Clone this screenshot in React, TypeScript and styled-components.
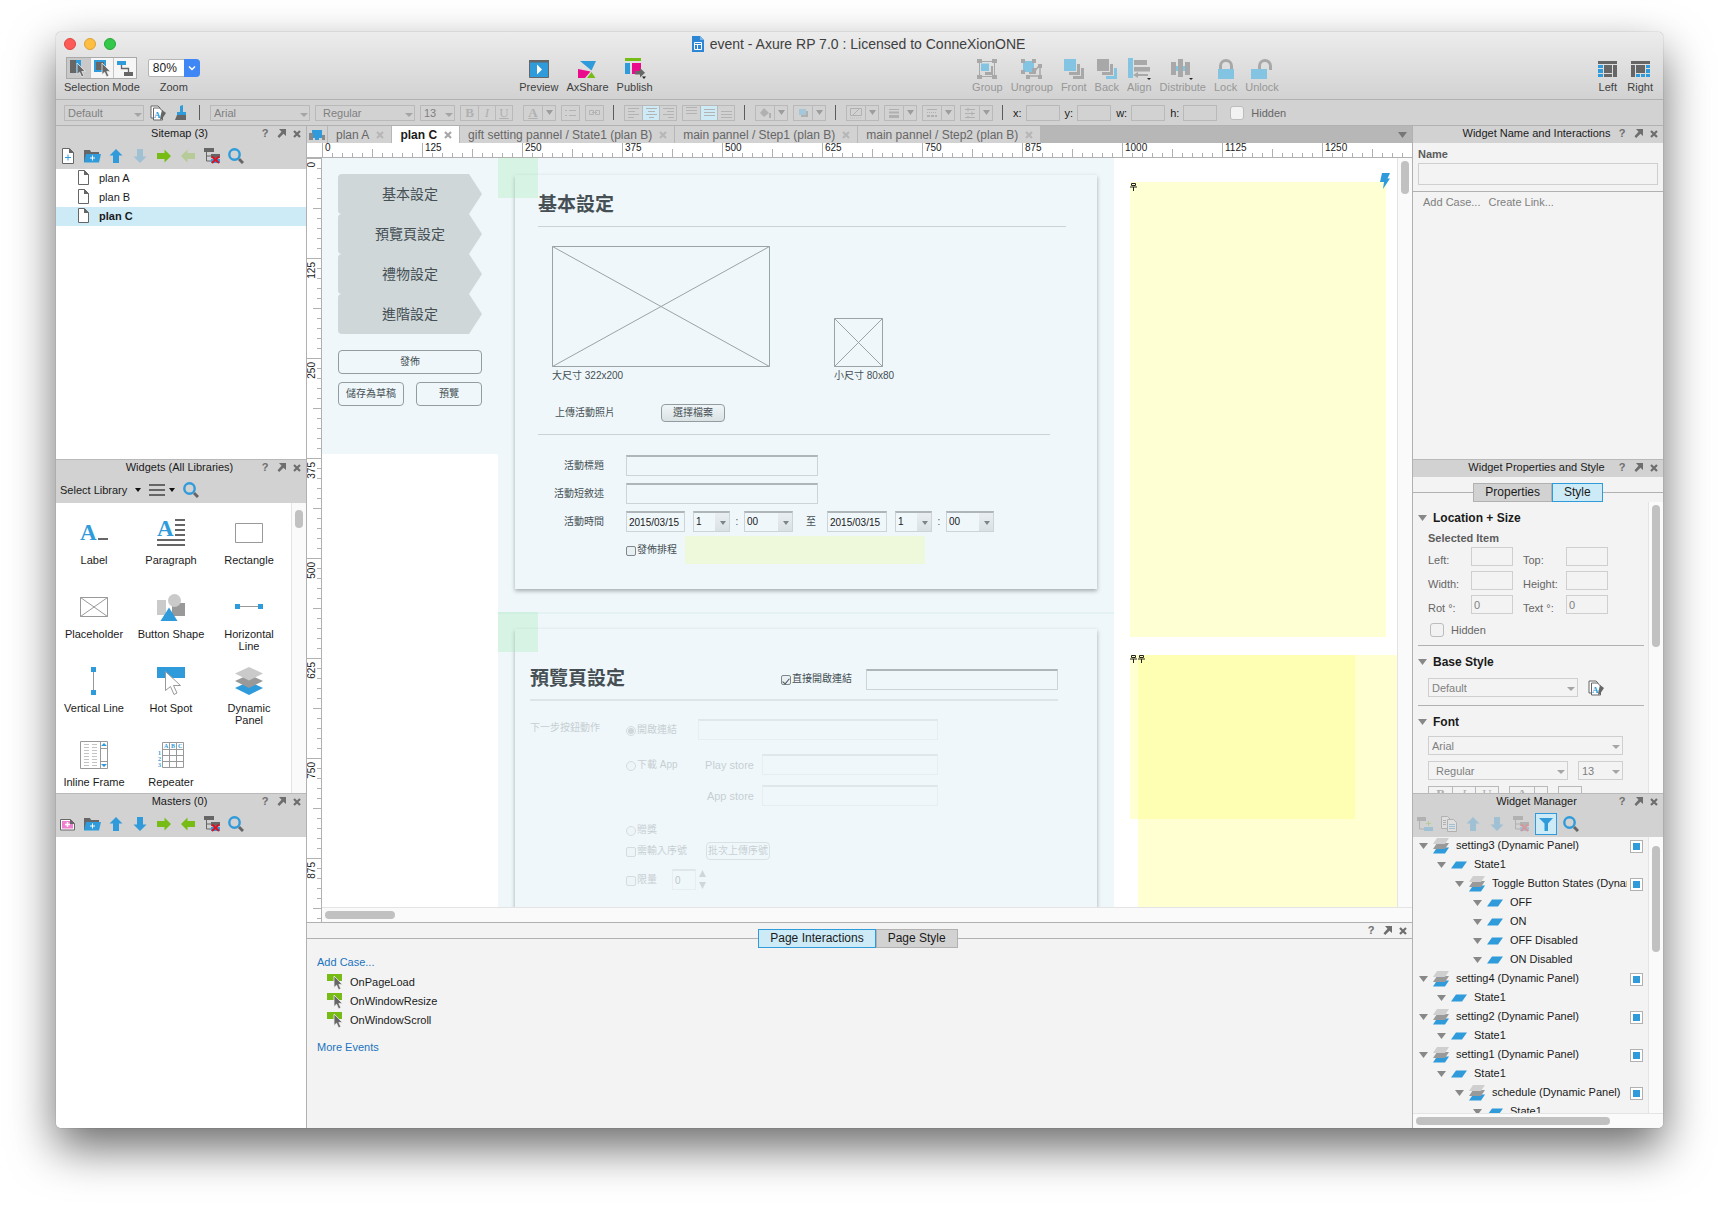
import React from 'react';
import styled, { createGlobalStyle, css } from 'styled-components';

const BLUE = '#2f9bdb';
const GREY = '#666';
const GREEN = '#76bc14';
const PINK = '#ec0a8c';
const SKY = '#82c4e2';
const DIM = '#a8a8a8';

const GlobalStyle = createGlobalStyle`
  * { box-sizing: border-box; }
  body {
    margin: 0;
    background: #fff;
    font: 11px/14px "Liberation Sans", "Noto Sans CJK TC", sans-serif;
    color: #1a1a1a;
  }
  button, input, select { font: inherit; color: inherit; margin: 0; }
  button { cursor: default; }
  svg { display: block; flex: none; }
  h1, h2, h3, p, ul, figure, fieldset { margin: 0; padding: 0; border: 0; }
  ul { list-style: none; }
`;

/* ---------- window frame ---------- */

const Desktop = styled.div`
  height: 100vh;
  min-height: 700px;
  padding: 32px 56px 80px;
  overflow: hidden;
`;

const Window = styled.div`
  display: flex;
  flex-direction: column;
  height: 100%;
  border-radius: 5px;
  overflow: hidden;
  background: #f3f3f3;
  box-shadow: 0 0 1px rgba(0, 0, 0, 0.5), 0 20px 46px rgba(0, 0, 0, 0.58);
`;

const Chrome = styled.header`
  height: 68px;
  flex: none;
  padding: 3px 10px 0 8px;
  background: linear-gradient(#ececec, #d2d2d2);
  border-bottom: 1px solid #b1b1b1;
`;

const TitleRow = styled.div`
  display: grid;
  grid-template-columns: 1fr auto 1fr;
  align-items: center;
  height: 18px;
`;

const Lights = styled.div`
  display: flex;
  gap: 8px;
`;

const Light = styled.button<{ $fill: string; $edge: string }>`
  width: 12px;
  height: 12px;
  padding: 0;
  border-radius: 50%;
  border: 1px solid ${(p) => p.$edge};
  background: ${(p) => p.$fill};
`;

const WindowTitle = styled.h1`
  display: flex;
  align-items: center;
  gap: 6px;
  font-size: 14px;
  font-weight: 400;
  line-height: 18px;
  color: #404040;
`;

const ToolRow = styled.div`
  display: flex;
  justify-content: space-between;
  padding-top: 4px;
`;

const ToolGroup = styled.div<{ $gap?: number }>`
  display: flex;
  gap: ${(p) => p.$gap ?? 8}px;
`;

const Tool = styled.button<{ $dim?: boolean }>`
  display: flex;
  flex-direction: column;
  align-items: center;
  padding: 0;
  border: 0;
  background: none;
  color: ${(p) => (p.$dim ? '#979797' : '#404040')};
  line-height: 14px;
`;

const ToolBlock = styled.div`
  display: flex;
  flex-direction: column;
  align-items: center;
  color: #404040;
`;

const ToolFace = styled.span`
  display: flex;
  align-items: center;
  justify-content: center;
  height: 23px;
`;

const Segments = styled.div`
  display: flex;
  height: 22px;
  margin-bottom: 1px;
  border: 1px solid #a9a9a9;
`;

const Segment = styled.button<{ $on?: boolean }>`
  width: 23px;
  padding: 1px 2px;
  border: 0;
  border-left: ${(p) => (p.$on ? 0 : '1px solid #c4c4c4')};
  background: ${(p) => (p.$on ? '#c9c9c9' : '#f6f6f6')};
`;

const ZoomBox = styled.span`
  position: relative;
  display: block;
  margin: 2px 0 3px;
  select {
    appearance: none;
    width: 52px;
    height: 18px;
    padding: 0 4px;
    border: 1px solid #b5b5b5;
    border-radius: 2px 4px 4px 2px;
    background: #fff;
    font-size: 12px;
    color: #1a1a1a;
  }
  svg {
    position: absolute;
    right: 0;
    top: 0;
    pointer-events: none;
  }
`;

/* ---------- format bar ---------- */

const FormatBar = styled.div`
  display: flex;
  align-items: center;
  gap: 5px;
  height: 26px;
  flex: none;
  padding: 0 8px;
  background: #d2d2d2;
  border-bottom: 1px solid #b1b1b1;
`;

const PickBox = styled.span<{ $w: number; $panel?: boolean; $inset?: boolean }>`
  position: relative;
  display: block;
  flex: none;
  width: ${(p) => p.$w}px;
  select {
    appearance: none;
    display: block;
    width: 100%;
    height: ${(p) => (p.$panel ? 19 : 16)}px;
    padding: 0 ${(p) => (p.$inset ? 7 : 3)}px;
    border: 1px solid ${(p) => (p.$panel ? '#cfcfcf' : '#b9b9b9')};
    border-radius: 0;
    background: transparent;
    color: #808080;
    line-height: 14px;
  }
  &::after {
    content: '';
    position: absolute;
    right: ${(p) => (p.$panel ? 3 : 2)}px;
    top: ${(p) => (p.$panel ? 9 : 8)}px;
    border: 4px solid transparent;
    border-top-color: #a5a5a5;
    border-bottom: 0;
    pointer-events: none;
  }
`;

const IconButton = styled.button<{ $w?: number; $dim?: boolean; $on?: boolean }>`
  display: flex;
  align-items: center;
  justify-content: center;
  width: ${(p) => p.$w ?? 20}px;
  height: ${(p) => (p.$on ? 22 : 20)}px;
  padding: 0;
  border: ${(p) => (p.$on ? `1px solid ${BLUE}` : 0)};
  background: ${(p) => (p.$on ? '#cdeaf7' : 'none')};
  opacity: ${(p) => (p.$dim ? 0.3 : 1)};
`;

const Divider = styled.span`
  width: 1px;
  height: 15px;
  margin: 0 5px 0 4px;
  background: #5c5c5c;
`;

const Cells = styled.span<{ $push?: boolean }>`
  display: flex;
  height: 16px;
  border: 1px solid #b9b9b9;
  margin-left: ${(p) => (p.$push ? 5 : 0)}px;
`;

const Cell = styled.button<{ $on?: boolean; $w?: number }>`
  display: flex;
  align-items: center;
  justify-content: center;
  width: ${(p) => p.$w ?? 17}px;
  padding: 0;
  border: 0;
  background: ${(p) => (p.$on ? '#cdeaf7' : 'transparent')};
  color: #b0b0b0;
  font-family: "Liberation Serif", serif;
  font-size: 13px;
  line-height: 14px;
  & + & { border-left: 1px solid #b9b9b9; }
`;

const Field = styled.label`
  display: flex;
  align-items: center;
  gap: 4px;
  color: #1a1a1a;
  input {
    width: 34px;
    height: 16px;
    border: 1px solid #b9b9b9;
    background: transparent;
    padding: 0 3px;
  }
`;

const TickLabel = styled.label<{ $left?: number }>`
  display: flex;
  align-items: center;
  gap: 7px;
  margin-left: ${(p) => p.$left ?? 8}px;
  color: #666;
  input {
    appearance: none;
    width: 14px;
    height: 14px;
    margin: 0;
    border: 1px solid #bcbcbc;
    border-radius: 3px;
    background: #f2f2f2;
  }
`;

/* ---------- three columns ---------- */

const Body = styled.div`
  display: grid;
  grid-template-columns: 251px minmax(0, 1fr) 251px;
  flex: 1;
  min-height: 0;
`;

const SideColumn = styled.aside<{ $right?: boolean }>`
  display: grid;
  grid-template-rows: 333px 334px minmax(0, 1fr);
  min-height: 0;
  border-${(p) => (p.$right ? 'left' : 'right')}: 1px solid #b1b1b1;
`;

const Panel = styled.section<{ $white?: boolean }>`
  display: flex;
  flex-direction: column;
  min-height: 0;
  overflow: hidden;
  background: ${(p) => (p.$white ? '#fff' : '#f3f3f3')};
  & + & { border-top: 1px solid #b9b9b9; }
`;

const PanelBar = styled.div`
  display: grid;
  grid-template-columns: 38px minmax(0, 1fr) 44px;
  flex: none;
  height: 17px;
  padding: 0 3px 0 6px;
  background: #d2d2d2;
  h2 {
    grid-column: 2;
    font-size: 11px;
    font-weight: 400;
    line-height: 15px;
    text-align: center;
    white-space: nowrap;
  }
`;

const BarActions = styled.span`
  display: flex;
  gap: 4px;
`;

const BarAction = styled.button`
  display: flex;
  align-items: center;
  justify-content: center;
  width: 12px;
  height: 15px;
  padding: 0;
  border: 0;
  background: none;
  color: #6e6e6e;
  font-size: 11px;
  font-weight: 700;
  line-height: 15px;
`;

const PanelTools = styled.div`
  display: flex;
  align-items: center;
  gap: 4px;
  flex: none;
  height: 26px;
  padding: 0 2px;
  background: #d2d2d2;
`;

const PageRow = styled.li<{ $on?: boolean }>`
  display: flex;
  align-items: center;
  gap: 10px;
  height: 19px;
  padding: 0 0 2px 22px;
  background: ${(p) => (p.$on ? '#cdeaf7' : 'transparent')};
  font-weight: ${(p) => (p.$on ? 700 : 400)};
`;

const LibraryButton = styled.button<{ $gap: number }>`
  display: flex;
  align-items: center;
  gap: ${(p) => p.$gap}px;
  height: 20px;
  padding: 0 2px;
  border: 0;
  background: none;
`;

const ScrollArea = styled.div`
  display: flex;
  flex: 1;
  min-height: 0;
  overflow: hidden;
`;

const Track = styled.div<{ $h?: boolean }>`
  flex: none;
  padding: 3px;
  background: #fafafa;
  ${(p) =>
    p.$h
      ? css`height: 15px; border-top: 1px solid #e4e4e4;`
      : css`width: 15px; border-left: 1px solid #e4e4e4;`}
`;

const Thumb = styled.div<{ $len: number; $from?: number; $h?: boolean }>`
  border-radius: 4px;
  background: #c1c1c1;
  ${(p) =>
    p.$h
      ? css`height: 8px; width: ${p.$len}px; margin-left: ${p.$from ?? 0}px;`
      : css`width: 8px; height: ${p.$len}px; margin-top: ${p.$from ?? 0}px;`}
`;

const WidgetGrid = styled.div`
  flex: 1;
  display: grid;
  grid-template-columns: 76px 78px 78px;
  grid-auto-rows: 74px;
  padding-top: 16px;
  overflow: hidden;
`;

const WidgetItem = styled.button`
  display: flex;
  flex-direction: column;
  align-items: center;
  gap: 7px;
  padding: 0;
  border: 0;
  background: none;
  line-height: 12px;
`;

const WidgetName = styled.span`
  max-width: 72px;
`;

/* ---------- centre ---------- */

const Center = styled.main`
  display: flex;
  flex-direction: column;
  min-height: 0;
  background: #fff;
`;

const TabStrip = styled.div`
  display: flex;
  align-items: stretch;
  flex: none;
  height: 17px;
  background: #b7b7b7;
`;

const DocTab = styled.button<{ $on?: boolean }>`
  display: flex;
  align-items: center;
  gap: 7px;
  padding: 0 7px 0 8px;
  border: 0;
  border-right: 1px solid #b7b7b7;
  background: ${(p) => (p.$on ? '#fff' : '#d2d2d2')};
  color: ${(p) => (p.$on ? '#1a1a1a' : '#666')};
  font-size: 12px;
  font-weight: ${(p) => (p.$on ? 700 : 400)};
  line-height: 16px;
  white-space: nowrap;
`;

const TabIcon = styled.span`
  display: flex;
  align-items: center;
  width: 21px;
  padding-left: 2px;
  background: #d2d2d2;
  border-right: 1px solid #b7b7b7;
`;

const TabMenu = styled.button`
  margin-left: auto;
  padding: 0 5px;
  border: 0;
  background: none;
`;

const RulerTop = styled.div`
  display: flex;
  flex: none;
  height: 15px;
  padding-left: 15px;
  overflow: hidden;
  border-bottom: 1px solid #b1b1b1;
  font-size: 10px;
  line-height: 10px;
`;

const MarkTop = styled.span`
  flex: none;
  width: 100px;
  padding-left: 2px;
  border-left: 1px solid #b1b1b1;
  background:
    linear-gradient(#b1b1b1, #b1b1b1) 49px bottom / 1px 8px no-repeat,
    repeating-linear-gradient(90deg, transparent 0 9px, #b1b1b1 9px 10px) 0 bottom / 100% 4px no-repeat;
`;

const Work = styled.div`
  display: flex;
  flex: 1;
  min-height: 0;
`;

const RulerSide = styled.div`
  display: flex;
  flex-direction: column;
  flex: none;
  width: 15px;
  overflow: hidden;
  border-right: 1px solid #b1b1b1;
  font-size: 10px;
  line-height: 10px;
`;

const MarkSide = styled.span`
  flex: none;
  height: 100px;
  border-top: 1px solid #b1b1b1;
  background:
    linear-gradient(#b1b1b1, #b1b1b1) right 49px / 8px 1px no-repeat,
    repeating-linear-gradient(180deg, transparent 0 9px, #b1b1b1 9px 10px) right 0 / 4px 100% no-repeat;
  span {
    display: block;
    padding-bottom: 3px;
    writing-mode: vertical-rl;
    transform: rotate(180deg);
    width: 10px;
  }
`;

const CanvasArea = styled.div`
  display: flex;
  flex-direction: column;
  flex: 1;
  min-width: 0;
`;

const CanvasView = styled.div`
  position: relative;
  flex: 1;
  min-width: 0;
  min-height: 0;
  overflow: hidden;
  color: #454f54;
  font-size: 10px;
`;

/* Shapes dropped on the free canvas of the document. */
const Region = styled.div<{ $x: number; $y: number; $w: number; $h: number; $fill: string; $edge?: boolean }>`
  position: absolute;
  left: ${(p) => p.$x}px;
  top: ${(p) => p.$y}px;
  width: ${(p) => p.$w}px;
  height: ${(p) => p.$h}px;
  background: ${(p) => p.$fill};
  ${(p) => p.$edge && css`border-top: 2px solid #e4f2f6;`}
`;

const SideMenu = styled(Region)`
  padding: 16px;
`;

const Step = styled.button`
  display: block;
  width: 144px;
  height: 40px;
  padding: 0 12px;
  border: 0;
  border-radius: 4px 0 0 4px;
  background: #cfd7d9;
  clip-path: polygon(0 0, 91% 0, 100% 50%, 91% 100%, 0 100%);
  font-size: 14px;
  line-height: 38px;
`;

const Actions = styled.div`
  display: grid;
  grid-template-columns: 66px 66px;
  justify-content: space-between;
  gap: 8px 0;
  margin-top: 16px;
  & > :first-child { grid-column: 1 / -1; }
`;

const WireButton = styled.button`
  height: 24px;
  padding: 0;
  border: 1px solid #939da0;
  border-radius: 4px;
  background: transparent;
  line-height: 22px;
  white-space: nowrap;
`;

const Card = styled.section<{ $y: number; $h: number }>`
  position: absolute;
  left: 193px;
  top: ${(p) => p.$y}px;
  width: 582px;
  height: ${(p) => p.$h}px;
  background: #eff7fa;
  box-shadow: 0 2px 4px rgba(70, 80, 85, 0.45);
`;

const CardTitle = styled.h2`
  font-size: 19px;
  font-weight: 700;
  line-height: 28px;
`;

const CardHead = styled.div<{ $second?: boolean }>`
  display: flex;
  align-items: center;
  justify-content: space-between;
  padding: ${(p) => (p.$second ? '36px 39px 6px 15px' : '16px 31px 7px 23px')};
`;

const Rule = styled.div<{ $l: number; $r: number; $thick?: boolean }>`
  height: ${(p) => (p.$thick ? 2 : 1)}px;
  margin: 0 ${(p) => p.$r}px 0 ${(p) => p.$l}px;
  background: ${(p) => (p.$thick ? '#dde5e8' : '#c9d2d5')};
`;

const Pictures = styled.div`
  display: flex;
  align-items: flex-end;
  gap: 64px;
  padding: 19px 0 0 37px;
  figcaption {
    line-height: 18px;
    white-space: nowrap;
  }
`;

const SmallFigure = styled.figure`
  width: 49px;
`;

const Upload = styled.div`
  display: flex;
  align-items: center;
  height: 20px;
  margin: 18px 0 11px 40px;
  span { width: 106px; }
`;

const FileButton = styled(WireButton)`
  width: 64px;
  height: 18px;
  line-height: 16px;
  background: linear-gradient(#f0f6f8, #dbe2e4);
`;

const FormRows = styled.div`
  display: grid;
  gap: 7px;
  padding: 20px 0 0 23px;
`;

const FormRow = styled.div`
  display: flex;
  align-items: center;
  height: 21px;
`;

const RowName = styled.label`
  width: 66px;
  margin-right: 22px;
  text-align: right;
`;

const WireInput = styled.input<{ $w: number }>`
  width: ${(p) => p.$w}px;
  height: 21px;
  padding: 0 2px;
  border: 1px solid #ccd4d7;
  border-top: 2px solid #aeb6b9;
  background: transparent;
  color: #1a1a1a;
`;

const WireSelect = styled.span<{ $w: number }>`
  position: relative;
  margin-left: 8px;
  select {
    appearance: none;
    display: block;
    width: ${(p) => p.$w}px;
    height: 21px;
    padding: 0 2px;
    border: 1px solid #ccd4d7;
    border-top: 2px solid #aeb6b9;
    border-radius: 0;
    background: linear-gradient(#e8eef1, #dae1e4) right / 14px 100% no-repeat;
    color: #1a1a1a;
  }
  &::after {
    content: '';
    position: absolute;
    right: 4px;
    top: 10px;
    border: 3px solid transparent;
    border-top: 4px solid #7d8588;
    border-bottom: 0;
    pointer-events: none;
  }
`;

const Colon = styled.span`
  width: 14px;
  margin-right: -8px;
  text-align: center;
`;

const Until = styled.span`
  margin: 0 11px 0 13px;
`;

const Choice = styled.label<{ $w?: number }>`
  display: flex;
  align-items: center;
  gap: 1px;
  ${(p) => p.$w && css`width: ${p.$w}px;`}
  white-space: nowrap;
  input {
    appearance: none;
    display: grid;
    place-items: center;
    width: 10px;
    height: 10px;
    margin: 2px 0 0;
    border: 1px solid #7f888c;
    border-radius: 2px;
    background: #e9f0f2;
  }
  input[type='radio'] { border-radius: 50%; }
  input[type='radio']:checked::before {
    content: '';
    width: 6px;
    height: 6px;
    border-radius: 50%;
    background: #6d767a;
  }
  input[type='checkbox']:checked::before {
    content: '';
    width: 3px;
    height: 6px;
    border: solid #4a5458;
    border-width: 0 1px 1px 0;
    transform: rotate(40deg);
  }
`;

const Hint = styled.span`
  width: 240px;
  height: 28px;
  margin-left: 5px;
  background: #eef8da;
`;

const LinkField = styled.span`
  display: flex;
  align-items: center;
  gap: 14px;
`;

const Faded = styled.fieldset`
  display: grid;
  grid-template-columns: 96px 1fr;
  padding: 18px 0 0 15px;
  min-width: 0;
  opacity: 0.24;
`;

const FadedName = styled.span`
  line-height: 17px;
`;

const FadedRow = styled(FormRow)<{ $top?: number }>`
  margin-top: ${(p) => p.$top ?? 0}px;
`;

const StoreName = styled.label<{ $w: number }>`
  width: ${(p) => p.$w}px;
  margin-right: 8px;
  text-align: right;
  font-size: 11px;
`;

const SerialButton = styled(WireButton)`
  height: 18px;
  width: 64px;
  line-height: 16px;
`;

const Spinner = styled.span`
  display: grid;
  gap: 5px;
  margin-left: 3px;
`;

const Marker = styled.span<{ $x: number; $y: number }>`
  position: absolute;
  left: ${(p) => p.$x}px;
  top: ${(p) => p.$y}px;
`;

/* ---------- page interactions ---------- */

const PagePanel = styled.section`
  flex: none;
  height: 206px;
  border-top: 1px solid #b1b1b1;
  background: #f3f3f3;
`;

const TabLine = styled.div<{ $bottom?: boolean }>`
  display: grid;
  grid-template-columns: 44px 1fr 44px;
  height: 25px;
  padding: ${(p) => (p.$bottom ? '0 3px 0 0' : '6px 0 0')};
  background: linear-gradient(#b1b1b1, #b1b1b1) 0 15px / 100% 1px no-repeat;
`;

const Tabs = styled.div<{ $bottom?: boolean }>`
  grid-column: 2;
  display: flex;
  justify-content: center;
  padding-top: ${(p) => (p.$bottom ? 6 : 0)}px;
`;

const Tab = styled.button<{ $on?: boolean }>`
  height: 19px;
  padding: 0 11px;
  border: 1px solid ${(p) => (p.$on ? BLUE : '#b1b1b1')};
  background: ${(p) => (p.$on ? '#cdeaf7' : '#d2d2d2')};
  font-size: 12px;
  line-height: 17px;
`;

const EventArea = styled.div`
  padding: 7px 10px;
  a { color: #1c74bf; text-decoration: none; line-height: 14px; }
`;

const EventList = styled.ul`
  padding: 3px 0 11px 10px;
  li {
    display: flex;
    align-items: center;
    gap: 7px;
    height: 19px;
  }
`;

/* ---------- right column ---------- */

const NameBlock = styled.label`
  display: grid;
  gap: 2px;
  padding: 4px 5px 6px;
  border-bottom: 1px solid #b1b1b1;
  color: #5c5c5c;
  font-weight: 700;
  input {
    width: 100%;
    height: 22px;
    border: 1px solid #cfcfcf;
    background: transparent;
  }
`;

const CaseLinks = styled.div`
  display: flex;
  gap: 8px;
  padding: 3px 10px;
  a { color: #808080; text-decoration: none; }
`;

const StyleForm = styled.div`
  flex: 1;
  min-width: 0;
  padding: 0 4px 0 5px;
  overflow: hidden;
`;

const Group = styled.section`
  padding: 8px 0;
  border-bottom: 1px solid #b1b1b1;
  h3 {
    display: flex;
    align-items: center;
    gap: 6px;
    font-size: 12px;
    line-height: 16px;
  }
`;

const SubHead = styled.p`
  padding: 5px 0 0 10px;
  color: #5c5c5c;
  font-weight: 700;
`;

const MeasureGrid = styled.div`
  display: grid;
  grid-template-columns: 43px 52px 43px 42px;
  row-gap: 5px;
  padding: 2px 0 9px 10px;
  color: #666;
  label { padding-top: 7px; line-height: 12px; }
  input {
    width: 42px;
    height: 19px;
    padding: 0 2px;
    border: 1px solid #cfcfcf;
    background: transparent;
    color: #808080;
  }
`;

const Picks = styled.div<{ $top: number }>`
  display: flex;
  align-items: center;
  gap: 10px;
  padding: ${(p) => p.$top}px 0 0 10px;
`;

const Tree = styled.ul`
  flex: 1;
  min-width: 0;
  overflow: hidden;
`;

const TreeRow = styled.li<{ $depth: number }>`
  display: flex;
  align-items: center;
  height: 19px;
  padding: 0 5px 1px ${(p) => 6 + p.$depth * 18}px;
`;

const TreeIcon = styled.span`
  margin-left: 5px;
`;

const TreeName = styled.span`
  flex: 1;
  min-width: 0;
  margin: 0 3px 0 7px;
  padding-bottom: 2px;
  overflow: hidden;
  white-space: nowrap;
`;

const TreeTick = styled.button`
  display: grid;
  place-items: center;
  width: 13px;
  height: 13px;
  padding: 0;
  border: 1px solid #b1b1b1;
  background: #fff;
  &::before {
    content: '';
    width: 7px;
    height: 7px;
    background: ${BLUE};
  }
`;

/* ---------- icons ---------- */

type SvgProps = { w: number; h: number; children: React.ReactNode };
const Svg = ({ w, h, children }: SvgProps) => (
  <svg width={w} height={h} viewBox={`0 0 ${w} ${h}`} aria-hidden="true">
    {children}
  </svg>
);

const Cursor = ({ x, y, fill = GREY, edge = '#eee' }: { x: number; y: number; fill?: string; edge?: string }) => (
  <path transform={`translate(${x} ${y})`} d="M0 0v11.5l2.6-2.3 2 4.6 2.2-1-2-4.4h3.5z" fill={fill} stroke={edge} strokeWidth=".8" />
);

const DocIcon = () => (
  <Svg w={12} h={16}><path d="M0 0h8l4 4v12H0z" fill="#2c86d3" /><path d="M8 0v4h4z" fill="#7ab6e8" /><path d="M2.500 6.500h7v7h-7zM2.500 8.500h7M5.500 8.500v5" fill="none" stroke="#fff" /></Svg>
);
const Mode1 = () => (<Svg w={18} h={18}><path d="M1 1h7v13H1z" fill={GREY} /><path d="M7 1h5v13H7z" fill={BLUE} /><Cursor x={8} y={4} /></Svg>);
const Mode2 = () => (<Svg w={18} h={18}><path d="M1 1h12v12H1z" fill={BLUE} /><path d="M3 3h8v8H3z" fill={GREY} /><Cursor x={9} y={4} /></Svg>);
const Mode3 = () => (<Svg w={18} h={18}><path d="M1 2h9v4H1z" fill={BLUE} /><path d="M8 13h9v4H8z" fill={GREY} /><path d="M5.500 6v3.500h7V13" fill="none" stroke={GREY} strokeWidth="1.300" /></Svg>);
const Chevron = () => (<Svg w={16} h={18}><path d="M0 0h12a4 4 0 0 1 4 4v10a4 4 0 0 1-4 4H0z" fill="#3f87f5" /><path d="M5 7.500l3 3 3-3" fill="none" stroke="#fff" strokeWidth="1.500" /></Svg>);
const PreviewIcon = () => (<Svg w={20} h={18}><path d="M.5.5h19v17H.5z" fill={BLUE} stroke={GREY} /><path d="M0 0h20v2.500H0z" fill={GREY} /><path d="M8 4.500v10l5-5z" fill="#fff" /></Svg>);
const ShareIcon = () => (<Svg w={18} h={18}><path d="M2 1h16l-4.500 9.500z" fill={BLUE} /><path d="M0 9l12.500 2.500L7 18H0z" fill={PINK} /><path d="M13.500 12l4 6H9z" fill={GREEN} /></Svg>);
const PublishIcon = () => (<Svg w={22} h={21}><path d="M1 0h16v3H1z" fill={GREEN} /><path d="M1 5h5v11H1z" fill={BLUE} /><path d="M8 5h9v11H8z" fill={PINK} /><path d="M11 13h5v-3l5 4.800-5 4.700v-3h-5z" fill={GREY} /><path d="M18 18.500h4l-2 2.500z" fill="#222" /></Svg>);
const GroupIcon = () => (<Svg w={20} h={20}><path d="M2.500 2.500h15v15h-15z" fill="none" stroke={DIM} /><path d="M0 0h5v4H0zM15 0h5v4h-5zM0 16h5v4H0zM15 16h5v4h-5zM8 13h6V7h2v9H8z" fill={DIM} /><path d="M4 4.500h8v7.500H4z" fill={SKY} /></Svg>);
const UngroupIcon = () => (<Svg w={21} h={20}><path d="M2 2h11v11H2z" fill={SKY} /><path d="M0 0h4v4H0zM11 0h4v4h-4zM0 11h4v4H0zM11 9h4v4h-4zM17 5h4v4h-4zM17 16h4v4h-4zM5 16h4v4H5zM8 13h7v2H8z" fill={DIM} /><path d="M19 9v8H8M13 13l5-6" fill="none" stroke={DIM} strokeWidth="1.500" /></Svg>);
const StackIcon = ({ back }: { back?: boolean }) => (<Svg w={20} h={20}><path d="M0 0h12v12H0z" fill={back ? DIM : SKY} /><path d="M13 5h3v11H5v-3h8z" fill={DIM} /><path d="M17 9h3v11H9v-3h8z" fill={back ? SKY : DIM} /></Svg>);
const AlignIcon = () => (<Svg w={23} h={22}><path d="M0 0h5v20H0z" fill={SKY} /><path d="M6 2h13v5H6zM6 9h16v4.500H6zM5 17l5-3v2h10v2H10v2z" fill={DIM} /><path d="M19 20h4l-2 2z" fill="#222" /></Svg>);
const DistributeIcon = () => (<Svg w={23} h={22}><path d="M3 8h14v5H3z" fill={SKY} /><path d="M0 4h5v13H0zM7 1h5v18H7zM14 4h5v13h-5z" fill={DIM} /><path d="M18 20h4l-2 2z" fill="#222" /></Svg>);
const LockIcon = ({ open }: { open?: boolean }) => (
  <Svg w={open ? 22 : 16} h={20}><path d={open ? 'M8.500 12V7a5 5 0 0 1 11 0v4' : 'M2.500 11V7a5.500 5.500 0 0 1 11 0v4'} fill="none" stroke={DIM} strokeWidth="3" /><path d="M0 10h16v10H0z" fill={SKY} /></Svg>
);
const LayoutIcon = ({ right }: { right?: boolean }) => (
  <Svg w={19} h={16}><path d="M0 0h19v3H0z" fill={GREY} />
    {right ? <><path d="M0 4h4v12H0zM5 4h9v8H5z" fill={GREY} /><path d="M15 4h4v3h-4zM15 8h4v4h-4zM15 13h4v3h-4zM5 13h4v3H5zM10 13h4v3h-4z" fill={BLUE} /></>
      : <><path d="M15 4h4v12h-4zM6 4h8v8H6zM6 13h8v3H6z" fill={GREY} /><path d="M0 4h5v3H0zM0 8h5v4H0zM0 13h5v3H0z" fill={BLUE} /></>}
  </Svg>
);
const StyleEdit = () => (
  <Svg w={16} h={16}><path d="M1 1h7l2 2v10H1z" fill="#fff" stroke={GREY} /><path d="M3.500 3h6l3 3v9h-9z" fill="#fff" stroke={GREY} /><text x="4" y="13" fontSize="9" fontWeight="700" fontFamily="Liberation Serif" fill={BLUE}>A</text><path d="M12 5l4 3-4 6-2 1 .5-4z" fill={GREY} /></Svg>
);
const Brush = () => (<Svg w={12} h={16}><path d="M5 1l3-1v8H5z" fill={BLUE} /><path d="M2 7h9v3H2z" fill={BLUE} /><path d="M2 10h9v5H0z" fill={GREY} /></Svg>);
const Lines = ({ d }: { d: string }) => (<Svg w={13} h={12}><path d={d} stroke="#b3b3b3" fill="none" /></Svg>);
const Down = ({ s = 7, fill = '#9d9d9d' }: { s?: number; fill?: string }) => (<svg width={s} height={Math.round(s * 0.7)} viewBox="0 0 10 7" preserveAspectRatio="none" aria-hidden="true"><path d="M0 0h10L5 7z" fill={fill} /></svg>);
const PopOut = () => (<Svg w={9} h={9}><path d="M2 0h7v7L6.500 4.700 2.200 9 .5 7.300 4.500 2.800z" fill="#6e6e6e" /></Svg>);
const Cross = ({ fill = '#6e6e6e' }: { fill?: string }) => (<Svg w={8} h={8}><path d="M1 1l6 6M7 1L1 7" stroke={fill} strokeWidth="2.200" /></Svg>);
const NewPage = ({ pink }: { pink?: boolean }) => pink
  ? (<Svg w={16} h={16}><path d="M.5 3.500h10l4 4v6.500H.5z" fill="#fff" stroke={GREY} /><path d="M10 3l5 5h-5z" fill={GREY} /><path d="M2 5h8v3h3v4.500H2z" fill="#f07fd0" /><path d="M5 8.500h5M7.500 6v5" stroke="#fff" strokeWidth="1.500" /></Svg>)
  : (<Svg w={12} h={16}><path d="M.5.5h7l4 4v11H.5z" fill="#fff" stroke={GREY} /><path d="M7 0l5 5H7z" fill={GREY} /><path d="M3 9.500h6M6 6.500v6" stroke={BLUE} /></Svg>);
const NewFolder = () => (<Svg w={17} h={14}><path d="M0 1h6l1 2h8v10H0z" fill={GREY} /><path d="M2 5h15l-2 8.500H0z" fill={BLUE} /><path d="M6 9h5M8.500 6.500v5" stroke="#fff" /></Svg>);
const Arrow = ({ turn, fill, dim }: { turn: number; fill: string; dim?: boolean }) => (
  <Svg w={16} h={16}><path transform={`rotate(${turn} 8 8)`} d="M8 1l6.500 6.500H11V15H5V7.500H1.500z" fill={fill} opacity={dim ? 0.3 : 1} /></Svg>
);
const DeleteTree = () => (<Svg w={17} h={16}><path d="M0 0h10v4H0zM7 6h9v4H7zM7 11h9v4H7z" fill={GREY} /><path d="M7 11h9v4H7z" fill={BLUE} /><path d="M2.500 4v9H7M2.500 8H7" fill="none" stroke={GREY} /><path d="M8 8.500l7 6.500M15 8.500L8 15" stroke="#e01020" strokeWidth="2" /></Svg>);
const Search = () => (<Svg w={16} h={16}><circle cx="6.500" cy="6.500" r="5.200" fill="none" stroke={BLUE} strokeWidth="2.400" /><path d="M11 11l4 4" stroke={GREY} strokeWidth="3" /></Svg>);
const Page = () => (<Svg w={11} h={15}><path d="M.5.5h6l4 4v10H.5z" fill="#fff" stroke={GREY} /><path d="M6 0l5 5H6z" fill={GREY} /></Svg>);
const AddNode = () => (<Svg w={16} h={14}><path d="M0 0h9v4H0z" fill={GREY} /><path d="M7 10h9v4H7z" fill={BLUE} /><path d="M2.500 4v8H7" stroke={GREY} fill="none" /><path d="M9 6.500h5M11.500 4v5" stroke={GREEN} /></Svg>);
const CopyIcon = () => (<Svg w={16} h={16}><path d="M.5.5h6l3 3v9h-9z" fill="#fff" stroke={GREY} /><path d="M6.500 3.500h6l3 3v9h-9z" fill="#fff" stroke={GREY} /><path d="M8 8.500h6M8 10.500h6M8 12.500h6" stroke={BLUE} /><path d="M2 4.500h3M2 6.500h3M2 8.500h3" stroke={GREY} /></Svg>);
const Filter = () => (<Svg w={16} h={14}><path d="M1 1h14L10 6.500V14H6.500V6.500z" fill={BLUE} /></Svg>);
const Layers = () => (<Svg w={16} h={16}><path d="M4 9.500h12l-4 6H0z" fill={BLUE} /><path d="M4 5h12l-4 6H0z" fill="#999" /><path d="M4 0h12l-4 6H0z" fill="#cfcfcf" /></Svg>);
const StateIcon = () => (<Svg w={16} h={8}><path d="M5 .5h11l-5 7H0z" fill={BLUE} /></Svg>);
const EventIcon = () => (<Svg w={16} h={17}><path d="M0 1h15v7H0z" fill={GREEN} /><Cursor x={7} y={3} /></Svg>);
const Device = () => (<Svg w={17} h={12}><path d="M3 1h10v8H3z" fill={BLUE} /><path d="M0 4h4v7H0zM13 6h3v5h-3z" fill="#888" /><path d="M6 9h4v2H6z" fill={BLUE} /></Svg>);
const Bolt = () => (<Svg w={10} h={16}><path d="M2 0h8L7.500 5.500H10L3 16l1-7H0z" fill={BLUE} /></Svg>);
const Pin = () => (<Svg w={7} h={9}><path d="M1.500 1.500h4v2h-4zM0 5h7M3.500 5v4" fill="none" stroke="#222" /></Svg>);

const bigIcons: Record<string, React.ReactNode> = {
  Label: <><text x="0" y="21" fontSize="23" fontWeight="700" fontFamily="Liberation Serif" fill={BLUE}>A</text><path d="M18 20h10" stroke={GREY} strokeWidth="2" /></>,
  Paragraph: <><text x="0" y="17" fontSize="23" fontWeight="700" fontFamily="Liberation Serif" fill={BLUE}>A</text><path d="M18 1h10M18 6h10M18 11h10M18 16h10M0 21h28M0 26h28" stroke={GREY} strokeWidth="2" /></>,
  Rectangle: <path d="M.5 4.500h27v19H.5z" fill="#fff" stroke="#999" />,
  Placeholder: <path d="M.5 4.500h27v19H.5zM.5 4.500l27 19M27.500 4.500l-27 19" fill="none" stroke="#999" />,
  'Button Shape': <><path d="M0 7h9v15H0z" fill="#cacaca" /><path d="M15 10h13v13H15z" fill="#999" /><circle cx="17.500" cy="7.500" r="6.500" fill="#cacaca" /><path d="M12 14.500L20.500 28h-17z" fill={BLUE} /></>,
  'Horizontal Line': <><path d="M2 13.500h24" stroke="#999" /><path d="M0 11h5v5H0zM23 11h5v5h-5z" fill={BLUE} /></>,
  'Vertical Line': <><path d="M13.500 2v24" stroke="#999" /><path d="M11 0h5v5h-5zM11 23h5v5h-5z" fill={BLUE} /></>,
  'Hot Spot': <><path d="M0 0h28v11H0z" fill={BLUE} /><path d="M8.500 4.500v19l5-4 3.500 8 3-1.500-3.500-7.500h7z" fill="#fff" stroke="#999" /></>,
  'Dynamic Panel': <><path d="M14 14.500L28 21l-14 7-14-7z" fill={BLUE} /><path d="M14 7.500L28 14l-14 7-14-7z" fill="#999" /><path d="M14 0l14 6.500-14 7-14-7z" fill="#cacaca" /></>,
  'Inline Frame': <><path d="M.5.5h27v27H.5zM20.500.5v27M20.500 7.500h7M20.500 20.500h7" fill="none" stroke="#999" /><path d="M4 3.500h5M12 3.500h5M4 6.500h5M12 6.500h5M4 9.500h5M12 9.500h5M4 12.500h5M12 12.500h5M4 15.500h5M12 15.500h5M4 18.500h5M12 18.500h5M4 21.500h5M12 21.500h5M4 24.500h5M12 24.500h5" stroke="#c4c4c4" /><path d="M24 2l3 3h-6zM24 26l3-3h-6z" fill={BLUE} /></>,
  Repeater: <><path d="M5.500 1.500h21v25h-21zM5.500 8.500h21M5.500 14.500h21M5.500 20.500h21M12.500 1.500v25M19.500 1.500v25" fill="none" stroke="#999" /><g fontSize="6" fontWeight="700" fill={BLUE} fontFamily="Liberation Serif"><text x="7" y="7">A</text><text x="14" y="7">B</text><text x="21" y="7">C</text><text x="1" y="14">1</text><text x="1" y="20">2</text><text x="1" y="26">3</text></g></>,
};

/* ---------- pieces ---------- */

const HeaderActions = () => (
  <BarActions>
    <BarAction aria-label="Help">?</BarAction>
    <BarAction aria-label="Undock"><PopOut /></BarAction>
    <BarAction aria-label="Close"><Cross /></BarAction>
  </BarActions>
);

const PanelHeader = ({ title }: { title: string }) => (
  <PanelBar><h2>{title}</h2><HeaderActions /></PanelBar>
);

const Pick = ({ value, label, w, panel, inset }: { value: string; label: string; w: number; panel?: boolean; inset?: boolean }) => (
  <PickBox $w={w} $panel={panel} $inset={inset}>
    <select aria-label={label} defaultValue={value}><option>{value}</option></select>
  </PickBox>
);

const SplitCell = ({ label, children, push }: { label: string; children: React.ReactNode; push?: boolean }) => (
  <Cells $push={push}>
    <Cell $w={18} aria-label={label}>{children}</Cell>
    <Cell $w={13} aria-label={`${label} options`}><Down /></Cell>
  </Cells>
);

const WireDrop = ({ value, w, label }: { value: string; w: number; label: string }) => (
  <WireSelect $w={w}><select aria-label={label} defaultValue={value}><option>{value}</option></select></WireSelect>
);

const tools: [string, React.ReactNode][] = [
  ['Group', <GroupIcon />], ['Ungroup', <UngroupIcon />], ['Front', <StackIcon />], ['Back', <StackIcon back />],
  ['Align', <AlignIcon />], ['Distribute', <DistributeIcon />], ['Lock', <LockIcon />], ['Unlock', <LockIcon open />],
];

const tabs = ['plan A', 'plan C', 'gift setting pannel / State1 (plan B)', 'main pannel / Step1 (plan B)', 'main pannel / Step2 (plan B)'];

const ticks = Array.from({ length: 11 }, (_, i) => i * 125);

const tree: [number, string, boolean][] = [
  [0, 'setting3 (Dynamic Panel)', true], [1, 'State1', false], [2, 'Toggle Button States (Dynamic Panel)', true],
  [3, 'OFF', false], [3, 'ON', false], [3, 'OFF Disabled', false], [3, 'ON Disabled', false],
  [0, 'setting4 (Dynamic Panel)', true], [1, 'State1', false], [0, 'setting2 (Dynamic Panel)', true], [1, 'State1', false],
  [0, 'setting1 (Dynamic Panel)', true], [1, 'State1', false], [2, 'schedule (Dynamic Panel)', true], [3, 'State1', false],
];

const TopChrome = () => (
  <Chrome>
    <TitleRow>
      <Lights>
        <Light $fill="#fc5b57" $edge="#df4744" aria-label="Close window" />
        <Light $fill="#fdbe41" $edge="#dea034" aria-label="Minimise window" />
        <Light $fill="#34c84a" $edge="#27a735" aria-label="Zoom window" />
      </Lights>
      <WindowTitle><DocIcon />event - Axure RP 7.0 : Licensed to ConneXionONE</WindowTitle>
    </TitleRow>
    <ToolRow>
      <ToolGroup>
        <ToolBlock>
          <Segments>
            <Segment $on aria-label="Select intersected"><Mode1 /></Segment>
            <Segment aria-label="Select contained"><Mode2 /></Segment>
            <Segment aria-label="Connector"><Mode3 /></Segment>
          </Segments>
          Selection Mode
        </ToolBlock>
        <ToolBlock>
          <ZoomBox>
            <select id="zoom" defaultValue="80%"><option>80%</option></select>
            <Chevron />
          </ZoomBox>
          <label htmlFor="zoom">Zoom</label>
        </ToolBlock>
      </ToolGroup>
      <ToolGroup>
        <Tool><ToolFace><PreviewIcon /></ToolFace>Preview</Tool>
        <Tool><ToolFace><ShareIcon /></ToolFace>AxShare</Tool>
        <Tool><ToolFace><PublishIcon /></ToolFace>Publish</Tool>
      </ToolGroup>
      <ToolGroup>
        {tools.map(([name, icon]) => <Tool key={name} $dim><ToolFace>{icon}</ToolFace>{name}</Tool>)}
      </ToolGroup>
      <ToolGroup $gap={10}>
        <Tool><ToolFace><LayoutIcon /></ToolFace>Left</Tool>
        <Tool><ToolFace><LayoutIcon right /></ToolFace>Right</Tool>
      </ToolGroup>
    </ToolRow>
  </Chrome>
);

const Formatting = () => (
  <FormatBar>
    <Pick value="Default" label="Widget style" w={80} />
    <IconButton $w={18} aria-label="Style editor"><StyleEdit /></IconButton>
    <IconButton $w={18} aria-label="Format painter"><Brush /></IconButton>
    <Divider />
    <Pick value="Arial" label="Font" w={100} />
    <Pick value="Regular" label="Typeface" w={100} inset />
    <Pick value="13" label="Font size" w={35} />
    <Cells>
      <Cell><b>B</b></Cell><Cell><i>I</i></Cell><Cell><u>U</u></Cell>
    </Cells>
    <SplitCell label="Text colour" push><b><u>A</u></b></SplitCell>
    <Cells><Cell aria-label="Bullets"><Lines d="M1 3.500h2M5 3.500h7M1 8.500h2M5 8.500h7" /></Cell></Cells>
    <Cells><Cell aria-label="Link"><Lines d="M1.500 3.500h4v4h-4zM7.500 3.500h4v4h-4zM4 5.500h5" /></Cell></Cells>
    <Divider />
    <Cells>
      <Cell aria-label="Align left"><Lines d="M1 1.500h11M1 4.500h7M1 7.500h11M1 10.500h6" /></Cell>
      <Cell $on aria-label="Align centre"><Lines d="M1 1.500h11M3 4.500h7M1 7.500h11M4 10.500h5" /></Cell>
      <Cell aria-label="Align right"><Lines d="M1 1.500h11M5 4.500h7M1 7.500h11M6 10.500h6" /></Cell>
    </Cells>
    <Cells>
      <Cell aria-label="Align top"><Lines d="M1 .5h11M1 3.500h11M1 6.500h11" /></Cell>
      <Cell $on aria-label="Align middle"><Lines d="M1 2.500h11M1 5.500h11M1 8.500h11" /></Cell>
      <Cell aria-label="Align bottom"><Lines d="M1 4.500h11M1 7.500h11M1 10.500h11" /></Cell>
    </Cells>
    <Divider />
    <SplitCell label="Fill"><Svg w={12} h={12}><path d="M5 1l5 5-5 4-4-4z" fill="#b0b0b0" /><path d="M11 6v5" stroke="#b0b0b0" strokeWidth="2" /></Svg></SplitCell>
    <SplitCell label="Shadow"><Svg w={12} h={12}><path d="M4 4h7v6H4z" fill="#b0b0b0" /><path d="M2 2h7v6H2z" fill="#a6c6da" /></Svg></SplitCell>
    <Divider />
    <SplitCell label="Line colour"><Svg w={12} h={12}><path d="M.5 1.500h11v7H.5zM3 8l7-7" fill="none" stroke="#b0b0b0" /><path d="M0 11h12" stroke="#bdbdbd" strokeDasharray="1 1" /></Svg></SplitCell>
    <SplitCell label="Line width"><Svg w={12} h={12}><path d="M1 2.500h10" stroke="#b0b0b0" /><path d="M1 5.500h10" stroke="#b0b0b0" strokeWidth="2" /><path d="M1 9.500h10" stroke="#b0b0b0" strokeWidth="3" /></Svg></SplitCell>
    <SplitCell label="Line style"><Svg w={12} h={12}><path d="M1 2.500h10" stroke="#b0b0b0" /><path d="M1 5.500h10" stroke="#b0b0b0" strokeDasharray="1 1" /><path d="M1 9h10" stroke="#b0b0b0" strokeWidth="2" strokeDasharray="3 1" /></Svg></SplitCell>
    <SplitCell label="Arrow style"><Svg w={12} h={12}><path d="M1 2.500h10M1 6.500h10M1 10.500h10M4 .5v4M8 4.500v4M4 8.500v3" stroke="#b0b0b0" /></Svg></SplitCell>
    <Divider />
    {['x:', 'y:', 'w:', 'h:'].map((name) => <Field key={name}>{name}<input type="text" /></Field>)}
    <TickLabel><input type="checkbox" />Hidden</TickLabel>
  </FormatBar>
);

const LeftColumn = () => (
  <SideColumn>
    <Panel $white>
      <PanelHeader title="Sitemap (3)" />
      <PanelTools>
        <IconButton aria-label="Add page"><NewPage /></IconButton>
        <IconButton aria-label="Add folder"><NewFolder /></IconButton>
        <IconButton aria-label="Move up"><Arrow turn={0} fill={BLUE} /></IconButton>
        <IconButton aria-label="Move down"><Arrow turn={180} fill={BLUE} dim /></IconButton>
        <IconButton aria-label="Indent"><Arrow turn={90} fill={GREEN} /></IconButton>
        <IconButton aria-label="Outdent"><Arrow turn={270} fill={GREEN} dim /></IconButton>
        <IconButton aria-label="Delete"><DeleteTree /></IconButton>
        <IconButton aria-label="Search"><Search /></IconButton>
      </PanelTools>
      <ul>
        {['plan A', 'plan B', 'plan C'].map((name) => <PageRow key={name} $on={name === 'plan C'}><Page />{name}</PageRow>)}
      </ul>
    </Panel>
    <Panel $white>
      <PanelHeader title="Widgets (All Libraries)" />
      <PanelTools>
        <LibraryButton $gap={8}>Select Library <Down s={6} fill="#111" /></LibraryButton>
        <LibraryButton $gap={4} aria-label="Library options">
          <Svg w={16} h={12}><path d="M0 1h16M0 6h16M0 11h16" stroke={GREY} strokeWidth="2" /></Svg>
          <Down s={6} fill="#111" />
        </LibraryButton>
        <IconButton aria-label="Search widgets"><Search /></IconButton>
      </PanelTools>
      <ScrollArea>
        <WidgetGrid>
          {Object.entries(bigIcons).map(([name, icon]) => (
            <WidgetItem key={name}><Svg w={28} h={28}>{icon}</Svg><WidgetName>{name}</WidgetName></WidgetItem>
          ))}
        </WidgetGrid>
        <Track><Thumb $len={18} $from={4} /></Track>
      </ScrollArea>
    </Panel>
    <Panel $white>
      <PanelHeader title="Masters (0)" />
      <PanelTools>
        <IconButton aria-label="Add master"><NewPage pink /></IconButton>
        <IconButton aria-label="Add folder"><NewFolder /></IconButton>
        <IconButton aria-label="Move up"><Arrow turn={0} fill={BLUE} /></IconButton>
        <IconButton aria-label="Move down"><Arrow turn={180} fill={BLUE} /></IconButton>
        <IconButton aria-label="Indent"><Arrow turn={90} fill={GREEN} /></IconButton>
        <IconButton aria-label="Outdent"><Arrow turn={270} fill={GREEN} /></IconButton>
        <IconButton aria-label="Delete"><DeleteTree /></IconButton>
        <IconButton aria-label="Search"><Search /></IconButton>
      </PanelTools>
    </Panel>
  </SideColumn>
);

const BasicCard = () => (
  <Card $y={17} $h={414}>
    <CardHead><CardTitle>基本設定</CardTitle></CardHead>
    <Rule $l={23} $r={31} />
    <Pictures>
      <figure>
        <Svg w={218} h={121}><path d="M.5.5h217v120H.5zM.5.5l217 120M217.500.5L.5 120.500" fill="none" stroke="#9aa3a6" /></Svg>
        <figcaption>大尺寸 322x200</figcaption>
      </figure>
      <SmallFigure>
        <Svg w={49} h={49}><path d="M.5.5h48v48H.5zM.5.5l48 48M48.500.5l-48 48" fill="none" stroke="#9aa3a6" /></Svg>
        <figcaption>小尺寸 80x80</figcaption>
      </SmallFigure>
    </Pictures>
    <Upload><span>上傳活動照片</span><FileButton>選擇檔案</FileButton></Upload>
    <Rule $l={23} $r={47} />
    <FormRows>
      <FormRow><RowName htmlFor="t1">活動標題</RowName><WireInput id="t1" $w={192} /></FormRow>
      <FormRow><RowName htmlFor="t2">活動短敘述</RowName><WireInput id="t2" $w={192} /></FormRow>
      <FormRow>
        <RowName htmlFor="t3">活動時間</RowName>
        <WireInput id="t3" $w={59} defaultValue="2015/03/15" />
        <WireDrop value="1" w={37} label="開始時" /><Colon>:</Colon><WireDrop value="00" w={49} label="開始分" />
        <Until>至</Until>
        <WireInput $w={60} defaultValue="2015/03/15" aria-label="結束日期" />
        <WireDrop value="1" w={37} label="結束時" /><Colon>:</Colon><WireDrop value="00" w={48} label="結束分" />
      </FormRow>
      <FormRow>
        <RowName as="span" />
        <Choice $w={54}><input type="checkbox" />發佈排程</Choice>
        <Hint />
      </FormRow>
    </FormRows>
  </Card>
);

const PreviewCard = () => (
  <Card $y={471} $h={400}>
    <CardHead $second>
      <CardTitle>預覽頁設定</CardTitle>
      <LinkField>
        <Choice><input type="checkbox" defaultChecked />直接開啟連結</Choice>
        <WireInput $w={192} aria-label="連結" />
      </LinkField>
    </CardHead>
    <Rule $l={15} $r={39} $thick />
    <Faded>
      <FadedName>下一步按鈕動作</FadedName>
      <div>
        <FadedRow><Choice $w={72}><input type="radio" name="next" defaultChecked />開啟連結</Choice><WireInput $w={240} aria-label="開啟連結" /></FadedRow>
        <FadedRow $top={14}><Choice $w={72}><input type="radio" name="next" />下載 App</Choice><StoreName $w={56} htmlFor="play">Play store</StoreName><WireInput id="play" $w={176} /></FadedRow>
        <FadedRow $top={10}><StoreName $w={128} htmlFor="apple">App store</StoreName><WireInput id="apple" $w={176} /></FadedRow>
        <FadedRow $top={13}><Choice><input type="radio" name="next" />贈獎</Choice></FadedRow>
        <FadedRow><Choice $w={80}><input type="checkbox" />需輸入序號</Choice><SerialButton>批次上傳序號</SerialButton></FadedRow>
        <FadedRow $top={8}>
          <Choice $w={46}><input type="checkbox" />限量</Choice>
          <WireInput $w={24} defaultValue="0" aria-label="數量" />
          <Spinner><Svg w={7} h={7}><path d="M3.500 0L7 7H0z" fill="#6d767a" /></Svg><Svg w={7} h={7}><path d="M3.500 7L7 0H0z" fill="#6d767a" /></Svg></Spinner>
        </FadedRow>
      </div>
    </Faded>
  </Card>
);

const Canvas = () => (
  <CanvasView>
    <SideMenu $x={0} $y={0} $w={176} $h={296} $fill="#eff7fa">
      {['基本設定', '預覽頁設定', '禮物設定', '進階設定'].map((name) => <Step key={name}>{name}</Step>)}
      <Actions><WireButton>發佈</WireButton><WireButton>儲存為草稿</WireButton><WireButton>預覽</WireButton></Actions>
    </SideMenu>
    <Region $x={176} $y={0} $w={616} $h={454} $fill="#eff7fa" />
    <Region $x={176} $y={454} $w={616} $h={400} $fill="#eff7fa" $edge />
    <BasicCard />
    <PreviewCard />
    <Region $x={176} $y={0} $w={40} $h={40} $fill="rgba(160, 235, 175, 0.3)" />
    <Region $x={176} $y={454} $w={40} $h={40} $fill="rgba(160, 235, 175, 0.3)" />
    <Region $x={808} $y={24} $w={256} $h={455} $fill="#ffffd4" />
    <Region $x={808} $y={497} $w={225} $h={164} $fill="rgba(255, 255, 128, 0.36)" />
    <Region $x={816} $y={497} $w={260} $h={400} $fill="rgba(255, 255, 128, 0.36)" />
    <Marker $x={808} $y={24}><Pin /></Marker>
    <Marker $x={808} $y={496}><Pin /></Marker>
    <Marker $x={816} $y={496}><Pin /></Marker>
    <Marker $x={1058} $y={15}><Bolt /></Marker>
  </CanvasView>
);

const CenterColumn = () => (
  <Center>
    <TabStrip>
      <TabIcon><Device /></TabIcon>
      {tabs.map((name) => <DocTab key={name} $on={name === 'plan C'}>{name}<Cross fill={name === 'plan C' ? '#a8a8a8' : '#b7b7b7'} /></DocTab>)}
      <TabMenu aria-label="All tabs"><Down s={9} fill="#777" /></TabMenu>
    </TabStrip>
    <RulerTop>{ticks.map((n) => <MarkTop key={n}>{n}</MarkTop>)}</RulerTop>
    <Work>
      <RulerSide>{ticks.slice(0, 8).map((n) => <MarkSide key={n}><span>{n}</span></MarkSide>)}</RulerSide>
      <CanvasArea>
        <ScrollArea><Canvas /><Track><Thumb $len={33} /></Track></ScrollArea>
        <Track $h><Thumb $h $len={70} /></Track>
      </CanvasArea>
    </Work>
    <PagePanel>
      <TabLine $bottom>
        <Tabs $bottom><Tab $on>Page Interactions</Tab><Tab>Page Style</Tab></Tabs>
        <HeaderActions />
      </TabLine>
      <EventArea>
        <a href="#add">Add Case...</a>
        <EventList>
          {['OnPageLoad', 'OnWindowResize', 'OnWindowScroll'].map((name) => <li key={name}><EventIcon />{name}</li>)}
        </EventList>
        <a href="#more">More Events</a>
      </EventArea>
    </PagePanel>
  </Center>
);

const measures: [string, string, string][] = [
  ['left', 'Left:', ''], ['top', 'Top:', ''], ['width', 'Width:', ''],
  ['height', 'Height:', ''], ['rotation', 'Rot °:', '0'], ['text-rotation', 'Text °:', '0'],
];

const RightColumn = () => (
  <SideColumn $right>
    <Panel>
      <PanelHeader title="Widget Name and Interactions" />
      <NameBlock>Name<input type="text" /></NameBlock>
      <CaseLinks><a href="#case">Add Case...</a><a href="#link">Create Link...</a></CaseLinks>
    </Panel>
    <Panel>
      <PanelHeader title="Widget Properties and Style" />
      <TabLine>
        <Tabs><Tab>Properties</Tab><Tab $on>Style</Tab></Tabs>
      </TabLine>
      <ScrollArea>
        <StyleForm>
          <Group>
            <h3><Down s={9} fill="#888" />Location + Size</h3>
            <SubHead>Selected Item</SubHead>
            <MeasureGrid>
              {measures.map(([id, name, value]) => (
                <React.Fragment key={id}>
                  <label htmlFor={id}>{name}</label>
                  <input id={id} type="text" defaultValue={value} />
                </React.Fragment>
              ))}
            </MeasureGrid>
            <TickLabel $left={12}><input type="checkbox" />Hidden</TickLabel>
          </Group>
          <Group>
            <h3><Down s={9} fill="#888" />Base Style</h3>
            <Picks $top={8}><Pick panel value="Default" label="Base style" w={150} /><StyleEdit /></Picks>
          </Group>
          <Group>
            <h3><Down s={9} fill="#888" />Font</h3>
            <Picks $top={6}><Pick panel value="Arial" label="Font family" w={195} /></Picks>
            <Picks $top={6}><Pick panel inset value="Regular" label="Font face" w={140} /><Pick panel value="13" label="Size" w={45} /></Picks>
            <Picks $top={6}>
              <Cells><Cell $w={23}><b>B</b></Cell><Cell $w={23}><i>I</i></Cell><Cell $w={23}><u>U</u></Cell></Cells>
              <Cells><Cell $w={24}><b>A</b></Cell><Cell $w={13} aria-label="Colours" /></Cells>
              <Cells><Cell $w={22} aria-label="Bullets" /></Cells>
            </Picks>
          </Group>
        </StyleForm>
        <Track><Thumb $len={142} /></Track>
      </ScrollArea>
    </Panel>
    <Panel>
      <PanelHeader title="Widget Manager" />
      <PanelTools>
        <IconButton $dim aria-label="Add state"><AddNode /></IconButton>
        <IconButton $dim aria-label="Duplicate"><CopyIcon /></IconButton>
        <IconButton $dim aria-label="Move up"><Arrow turn={0} fill={BLUE} /></IconButton>
        <IconButton $dim aria-label="Move down"><Arrow turn={180} fill={BLUE} /></IconButton>
        <IconButton $dim aria-label="Delete"><DeleteTree /></IconButton>
        <IconButton $on $w={22} aria-label="Filter"><Filter /></IconButton>
        <IconButton aria-label="Search"><Search /></IconButton>
      </PanelTools>
      <ScrollArea>
        <Tree>
          {tree.map(([depth, name, panel], i) => (
            <TreeRow key={i} $depth={depth}>
              <Down s={9} fill="#888" />
              <TreeIcon>{panel ? <Layers /> : <StateIcon />}</TreeIcon>
              <TreeName>{name}</TreeName>
              {panel && <TreeTick aria-label={`Toggle ${name}`} />}
            </TreeRow>
          ))}
        </Tree>
        <Track><Thumb $len={106} $from={6} /></Track>
      </ScrollArea>
      <Track $h><Thumb $h $len={194} /></Track>
    </Panel>
  </SideColumn>
);

export default function App() {
  return (
    <>
      <GlobalStyle />
      <Desktop>
        <Window>
          <TopChrome />
          <Formatting />
          <Body>
            <LeftColumn />
            <CenterColumn />
            <RightColumn />
          </Body>
        </Window>
      </Desktop>
    </>
  );
}
